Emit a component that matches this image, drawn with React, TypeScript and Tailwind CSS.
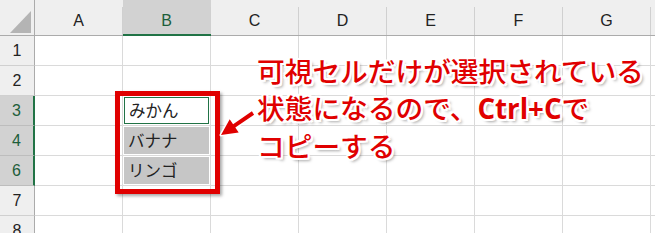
import React from "react";

const columns = ["A", "B", "C", "D", "E", "F", "G"];
const rows = ["1", "2", "3", "4", "6", "7", "8"];
const selectedRows = ["3", "4", "6"];
const fruits: Record<string, string> = {
  "3": "みかん",
  "4": "バナナ",
  "6": "リンゴ",
};

const jp = "font-['Noto_Sans_CJK_JP',sans-serif]";

const HeaderCell = ({ label, selected }: { label: string; selected?: boolean }) => (
  <div
    className={`flex pt-[7px] ${
      selected
        ? "border-b-2 border-[#217346] bg-[#d2d2d2] text-[#1d5e3a]"
        : "border-b border-[#ababab] bg-[#efefef] text-[#222]"
    }`}
  >
    <div className="flex flex-1 items-center justify-center border-r border-[#d0d0d0] font-['Liberation_Sans',sans-serif] text-[16px]">
      {label}
    </div>
  </div>
);

const RowHeader = ({ label }: { label: string }) => {
  const selected = selectedRows.includes(label);
  return (
    <div
      className={`flex items-center justify-center border-b font-['Liberation_Sans',sans-serif] text-[16px] ${
        selected
          ? "border-r-2 border-b-[#bdbdbd] border-r-[#217346] bg-[#d2d2d2] text-[#1d5e3a]"
          : "border-r border-b-[#d0d0d0] border-r-[#ababab] bg-[#efefef] text-[#222]"
      }`}
    >
      {label}
    </div>
  );
};

const Cell = ({ row, col }: { row: string; col: string }) => {
  const value = col === "B" ? fruits[row] : undefined;
  const active = value && row === "3";
  return (
    <div className="flex border-r border-b border-[#dadada] bg-white">
      {value && (
        <div
          className={`m-px flex flex-1 items-center pl-1 ${jp} text-[16.5px] text-[#222] ${
            active ? "border border-[#217346] bg-white" : "bg-[#c6c6c6]"
          }`}
        >
          {value}
        </div>
      )}
    </div>
  );
};

const Arrow = () => (
  <svg
    className="absolute top-[105px] left-[215px]"
    width="46"
    height="38"
    viewBox="0 0 46 38"
  >
    <polygon
      points="6,30 23.7,27.5 20.3,22.5 39.1,9.65 36.9,6.35 18.1,19.3 14.7,14.3"
      fill="#e00000"
      stroke="#fff"
      strokeWidth="3"
      strokeLinejoin="round"
      paintOrder="stroke"
    />
  </svg>
);

export default function App() {
  return (
    <div className="relative h-[233px] w-[655px] overflow-hidden bg-white">
      <div className="grid grid-cols-[35px_repeat(7,88px)_1fr] grid-rows-[36px_repeat(7,30px)]">
        <div className="relative border-r border-b border-[#ababab] bg-[#efefef]">
          <svg className="absolute top-[11px] left-[10px]" width="22" height="23" viewBox="0 0 22 23">
            <polygon points="0,22 21,0 21,22" fill="#b4b4b4" />
          </svg>
        </div>
        {columns.map((c) => (
          <HeaderCell key={c} label={c} selected={c === "B"} />
        ))}
        <div className="border-b border-[#ababab] bg-[#efefef]" />

        {rows.map((r) => (
          <React.Fragment key={r}>
            <RowHeader label={r} />
            {columns.map((c) => (
              <Cell key={c} row={r} col={c} />
            ))}
            <div className="border-b border-[#dadada]" />
          </React.Fragment>
        ))}
      </div>

      {/* red highlight around the visible cells */}
      <div className="absolute top-[91px] left-[115px] h-[103px] w-[105px] border-[5px] border-[#e00000] shadow-[2px_2px_3px_rgba(0,0,0,0.35)]" />

      <Arrow />

      <div
        className={`absolute top-[52px] left-[257px] ${jp} text-[27.7px] leading-[37px] font-medium whitespace-nowrap text-[#e00000] [text-shadow:2px_0_0_#fff,-2px_0_0_#fff,0_2px_0_#fff,0_-2px_0_#fff,2px_2px_0_#fff,-2px_-2px_0_#fff,2px_-2px_0_#fff,-2px_2px_0_#fff,3px_3px_3px_rgba(0,0,0,0.35)]`}
      >
        <div>可視セルだけが選択されている</div>
        <div>
          状態になるので、
          <span className="font-['Open_Sans',sans-serif] font-bold">Ctrl+C</span>で
        </div>
        <div>コピーする</div>
      </div>
    </div>
  );
}
